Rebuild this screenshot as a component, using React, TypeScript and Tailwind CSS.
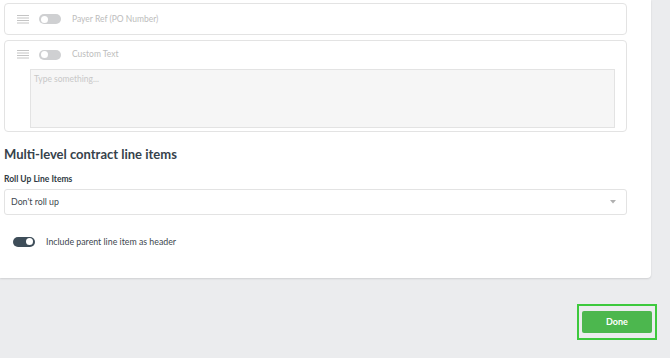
import React from 'react';

const Grip = () => (
    <svg width="12" height="9" viewBox="0 0 12 9" className="shrink-0">
        <g stroke="#c4c4c4" strokeWidth="1">
            <line x1="0" y1="0.5" x2="12" y2="0.5" />
            <line x1="0" y1="3" x2="12" y2="3" />
            <line x1="0" y1="5.5" x2="12" y2="5.5" />
            <line x1="0" y1="8" x2="12" y2="8" />
        </g>
    </svg>
);

const Toggle = ({ on = false }: { on?: boolean }) => (
    <div
        className={`w-[22px] h-[10px] rounded-full flex items-center px-[2px] shrink-0 ${
            on ? 'bg-[#3e4d59] justify-end' : 'bg-[#cfd0d2] justify-start'
        }`}
    >
        <div className="w-[7px] h-[7px] rounded-full bg-white" />
    </div>
);

const App = () => {
    return (
        <div className="w-[670px] h-[358px] bg-[#ebecee] overflow-hidden flex flex-col" style={{ fontFamily: 'Lato, "Open Sans", sans-serif' }}>
            <div className="w-[651px] h-[278px] bg-white rounded-br-[4px] shadow-[0_1px_2px_rgba(0,0,0,0.12)] pt-[3px] px-[4px] shrink-0">
                <div className="w-[623px] flex flex-col">
                    <div className="h-[32px] border border-[#e3e3e3] rounded-[4px] flex items-center pl-[12px] gap-[10px]">
                        <Grip />
                        <Toggle />
                        <span className="text-[8.5px] text-[#bdbdbd] ml-[1px]">Payer Ref (PO Number)</span>
                    </div>

                    <div className="mt-[5px] h-[92px] border border-[#e3e3e3] rounded-[4px] pl-[12px] pt-[8px] pr-[11px]">
                        <div className="flex items-center gap-[10px] h-[11px]">
                            <Grip />
                            <Toggle />
                            <span className="text-[8.5px] text-[#bdbdbd] ml-[1px]">Custom Text</span>
                        </div>
                        <div className="ml-[13px] mt-[9px] h-[59px] bg-[#f6f6f6] border border-[#e3e3e3] px-[3px] pt-[3px] text-[8.5px] leading-[12px] text-[#c8c8c8]">
                            Type something...
                        </div>
                    </div>

                    <h2 className="mt-[13px] text-[13px] leading-[18px] font-bold text-[#36424b]">Multi-level contract line items</h2>

                    <label className="mt-[10px] text-[8.5px] leading-[12px] font-bold text-[#2f3a42]">Roll Up Line Items</label>

                    <div className="mt-[4px] h-[26px] border border-[#e3e3e3] rounded-[3px] flex items-center justify-between pl-[6px] pr-[10px]">
                        <span className="text-[8.8px] text-[#3d474f]">Don't roll up</span>
                        <svg width="6" height="4" viewBox="0 0 6 4">
                            <path d="M0 0 L6 0 L3 3.5 Z" fill="#b0b0b0" />
                        </svg>
                    </div>

                    <div className="mt-[20px] ml-[9px] flex items-center gap-[10px]">
                        <Toggle on />
                        <span className="text-[8.8px] text-[#3d474f] ml-[1px]">Include parent line item as header</span>
                    </div>
                </div>
            </div>

            <div className="flex justify-end pr-[13px] pt-[26px]">
                <div className="border-2 border-[#3dc93d] px-[3px] py-[5px]">
                    <button className="w-[70px] h-[22px] bg-[#4cb74e] rounded-[2px] text-white text-[9px] font-bold flex items-center justify-center">
                        Done
                    </button>
                </div>
            </div>
        </div>
    );
};

export default App;
